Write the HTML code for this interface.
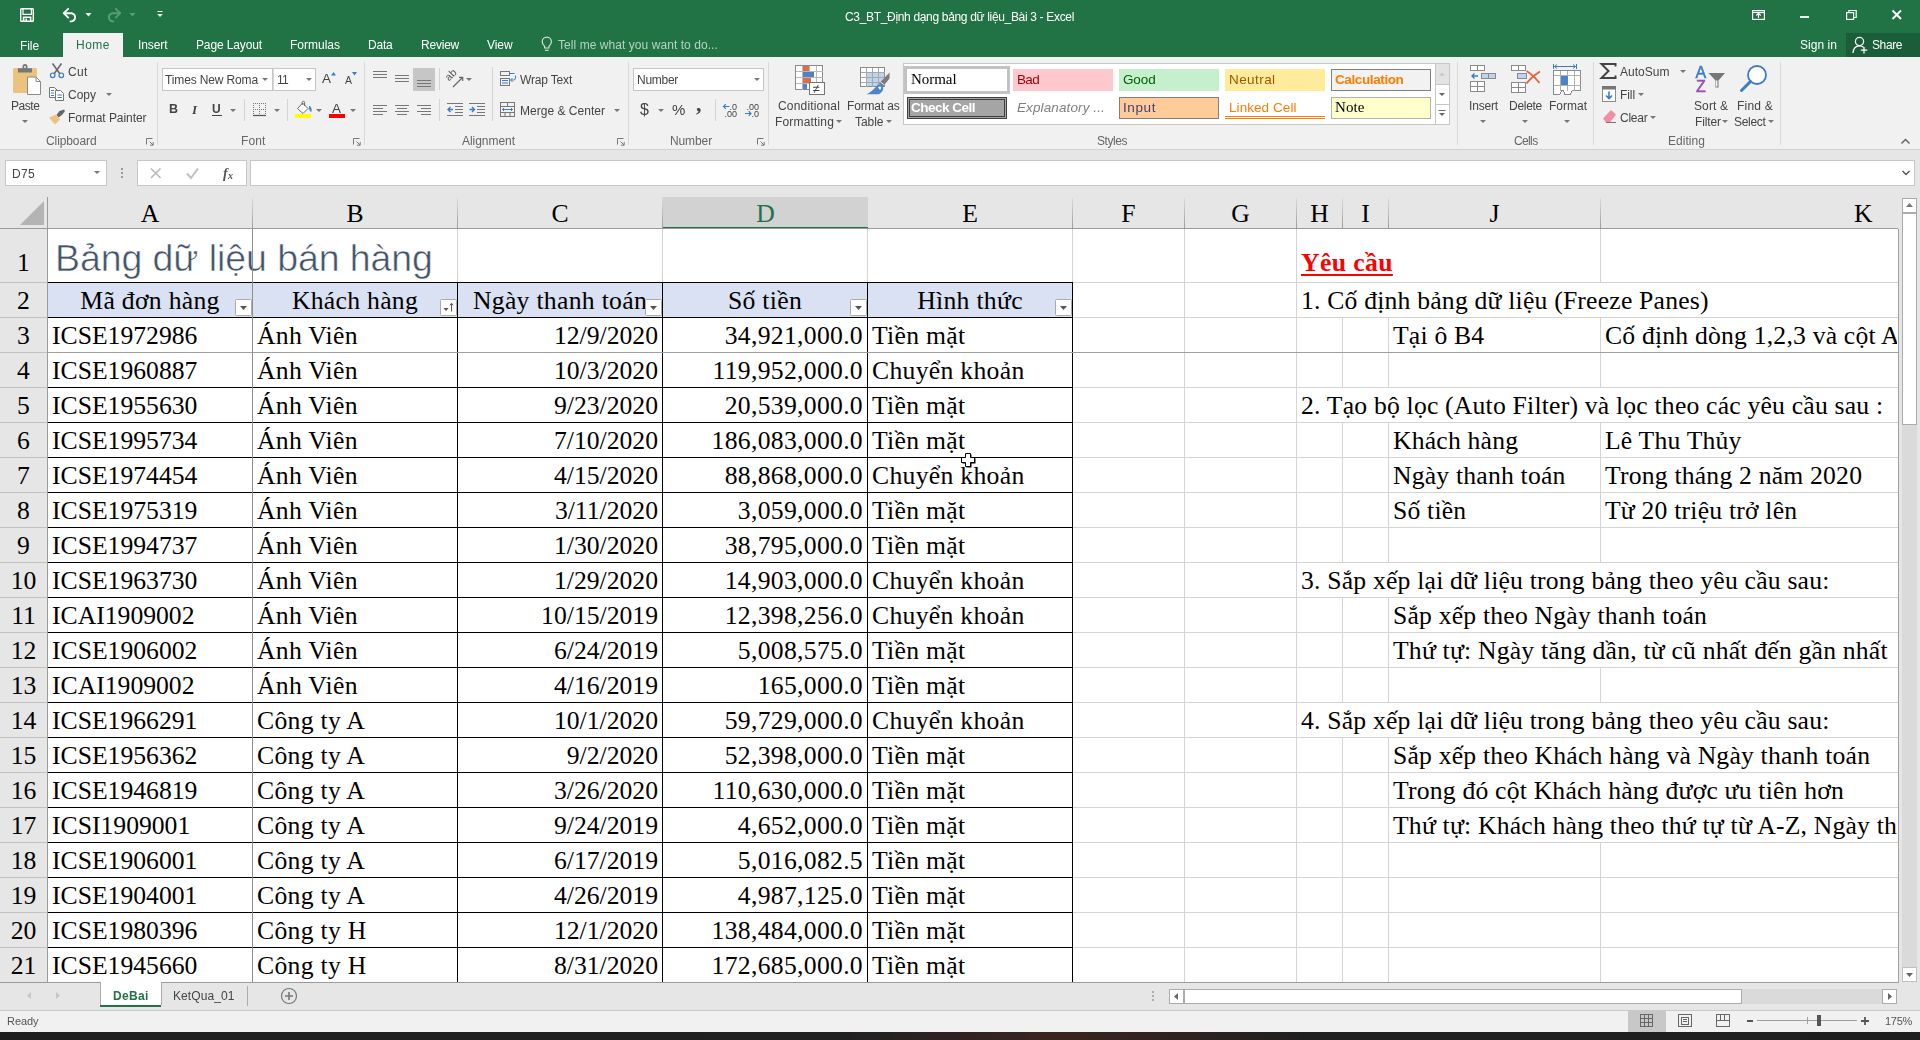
<!DOCTYPE html>
<html lang="vi"><head><meta charset="utf-8"><title>C3_BT_Định dạng bảng dữ liệu_Bài 3 - Excel</title>
<style>
html,body{margin:0;padding:0}
body{width:1920px;height:1040px;overflow:hidden;background:#e6e6e6;position:relative;font-family:"Liberation Sans",sans-serif;font-size:12px;color:#444}
div,span,svg{position:absolute;box-sizing:border-box}
b,i,u{position:static}
.t{white-space:nowrap;line-height:16px;height:16px;will-change:transform}
/* title bar */
#tb{left:0;top:0;width:1920px;height:57px;background:#217346}
#tb .t{color:#fff}
#hometab{left:63px;top:33px;width:60px;height:24px;background:#f1f1f1}
#ribbon{left:0;top:57px;width:1920px;height:93px;background:#f1f1f1;border-bottom:1px solid #d2d2d2}
.sep{width:1px;background:#d8d8d8;top:62px;height:84px}
.gl{top:134px;color:#666;text-align:center}
/* formula bar */
.box{background:#fff;border:1px solid #c6c6c6}
/* grid */
#grid{left:0;top:0;width:1898px;height:982px;overflow:hidden}
#sheet{left:48px;top:229px;width:1850px;height:753px;background:#fff}
#corner{left:0;top:197px;width:47px;height:31px}
.ch{top:197px;height:31px;border-right:1px solid #b1b1b1;border-image:linear-gradient(180deg,#e0e0e0,#9a9a9a) 1;border-width:0 1px 0 0;text-align:center;font:25.67px/34px "Liberation Serif",serif;color:#000;overflow:hidden}
.ch.sel{background:#d2d2d2;color:#217346;border-image:none;border-width:0 0 2px 0;border-style:solid;border-color:#217346;height:32px}
.rh{left:0;width:47px;text-align:center;font:25.67px "Liberation Serif",serif;color:#000;border-bottom:1px solid #c0c0c0;box-sizing:content-box;overflow:hidden}
#hline{left:0;top:228px;width:1898px;height:1px;background:#9b9b9b}
#vline{left:47px;top:197px;width:1px;height:785px;background:#9b9b9b}
.hl{left:48px;width:1850px;height:1px;background:#d4d4d4}
.vl{top:229px;width:1px;height:753px;background:#d4d4d4}
.c{height:34px;letter-spacing:.3px;font:25.67px/35px "Liberation Serif",serif;color:#000;white-space:nowrap;padding:0 4px;overflow:hidden}
.c.r{text-align:right}
.c.hd{background:#d9e1f2;text-align:center}
.c.w{background:#fff;letter-spacing:.2px}
.c.t1{line-height:67px}
.c.n{letter-spacing:0}
.yc{color:#f00;text-decoration:underline;text-decoration-thickness:2px;text-underline-offset:3px;font-weight:bold;letter-spacing:.4px}
.bh{left:48px;width:1025px;height:1px;background:#000}
.bv{top:282px;width:1px;height:700px;background:#000}
.fv{z-index:2;left:252px;top:229px;width:1px;height:753px;background:#8e8e8e}
.fh{left:48px;top:352px;width:1850px;height:1px;background:#a0a0a0}
.fb{}
#title{left:55px;top:229px;height:53px;letter-spacing:-.08px;font:37.5px/58px "Liberation Sans",sans-serif;color:#44546a;white-space:nowrap;-webkit-text-stroke:.55px #fff}
/* bottom */
#tabs{left:0;top:983px;width:1920px;height:27px;background:#e6e6e6}
#status{left:0;top:1010px;width:1920px;height:22px;background:#f1f1f1;border-top:1px solid #d0d0d0}
#task{left:0;top:1032px;width:1920px;height:8px;background:#1d1d1f}
.ar{width:0;height:0;border-left:3px solid transparent;border-right:3px solid transparent;border-top:3px solid #777}
#icons{pointer-events:none}

</style></head>
<body>
<div id="sheet"></div>
<div id="grid">
<div id="corner"><svg width="47" height="31" viewBox="0 0 47 31"><path d="M44 4 L44 28 L20 28 Z" fill="#b4b4b4"/></svg></div>
<div class="ch" style="left:48px;width:205px">A</div>
<div class="ch" style="left:253px;width:205px">B</div>
<div class="ch" style="left:458px;width:205px">C</div>
<div class="ch sel" style="left:663px;width:205px">D</div>
<div class="ch" style="left:868px;width:205px">E</div>
<div class="ch" style="left:1073px;width:112px">F</div>
<div class="ch" style="left:1185px;width:112px">G</div>
<div class="ch" style="left:1297px;width:46px">H</div>
<div class="ch" style="left:1343px;width:46px">I</div>
<div class="ch" style="left:1389px;width:212px">J</div>
<div class="ch" style="left:1601px;width:297px;border-right:0"><span style="position:absolute;left:253px">K</span></div>
<div class="rh" style="top:229px;height:53px;line-height:67px">1</div>
<div class="rh" style="top:283px;height:34px;line-height:35px">2</div>
<div class="rh" style="top:318px;height:34px;line-height:35px">3</div>
<div class="rh" style="top:353px;height:34px;line-height:35px">4</div>
<div class="rh" style="top:388px;height:34px;line-height:35px">5</div>
<div class="rh" style="top:423px;height:34px;line-height:35px">6</div>
<div class="rh" style="top:458px;height:34px;line-height:35px">7</div>
<div class="rh" style="top:493px;height:34px;line-height:35px">8</div>
<div class="rh" style="top:528px;height:34px;line-height:35px">9</div>
<div class="rh" style="top:563px;height:34px;line-height:35px">10</div>
<div class="rh" style="top:598px;height:34px;line-height:35px">11</div>
<div class="rh" style="top:633px;height:34px;line-height:35px">12</div>
<div class="rh" style="top:668px;height:34px;line-height:35px">13</div>
<div class="rh" style="top:703px;height:34px;line-height:35px">14</div>
<div class="rh" style="top:738px;height:34px;line-height:35px">15</div>
<div class="rh" style="top:773px;height:34px;line-height:35px">16</div>
<div class="rh" style="top:808px;height:34px;line-height:35px">17</div>
<div class="rh" style="top:843px;height:34px;line-height:35px">18</div>
<div class="rh" style="top:878px;height:34px;line-height:35px">19</div>
<div class="rh" style="top:913px;height:34px;line-height:35px">20</div>
<div class="rh" style="top:948px;height:34px;line-height:35px">21</div>
<div class="hl" style="top:282px"></div>
<div class="hl" style="top:317px"></div>
<div class="hl" style="top:352px"></div>
<div class="hl" style="top:387px"></div>
<div class="hl" style="top:422px"></div>
<div class="hl" style="top:457px"></div>
<div class="hl" style="top:492px"></div>
<div class="hl" style="top:527px"></div>
<div class="hl" style="top:562px"></div>
<div class="hl" style="top:597px"></div>
<div class="hl" style="top:632px"></div>
<div class="hl" style="top:667px"></div>
<div class="hl" style="top:702px"></div>
<div class="hl" style="top:737px"></div>
<div class="hl" style="top:772px"></div>
<div class="hl" style="top:807px"></div>
<div class="hl" style="top:842px"></div>
<div class="hl" style="top:877px"></div>
<div class="hl" style="top:912px"></div>
<div class="hl" style="top:947px"></div>
<div class="hl" style="top:982px"></div>
<div class="vl" style="left:252px"></div>
<div class="vl" style="left:457px"></div>
<div class="vl" style="left:662px"></div>
<div class="vl" style="left:867px"></div>
<div class="vl" style="left:1072px"></div>
<div class="vl" style="left:1184px"></div>
<div class="vl" style="left:1296px"></div>
<div class="vl" style="left:1342px"></div>
<div class="vl" style="left:1388px"></div>
<div class="vl" style="left:1600px"></div>
<div class="c hd" style="left:48px;top:283px;width:204px;height:34px">Mã đơn hàng</div>
<svg class="fb" style="left:235px;top:299px" width="17" height="17" viewBox="0 0 17 17"><rect x="0.5" y="0.5" width="16" height="16" rx="1" fill="#fdfdfd" stroke="#ababab"/><path d="M5 7h7l-3.5 4z" fill="#555"/></svg>
<div class="c hd" style="left:253px;top:283px;width:204px;height:34px">Khách hàng</div>
<svg class="fb" style="left:440px;top:299px" width="17" height="17" viewBox="0 0 17 17"><rect x="0.5" y="0.5" width="16" height="16" rx="1" fill="#fdfdfd" stroke="#ababab"/><path d="M3.5 9h5l-2.5 3z" fill="#555"/><path d="M11.5 12.5v-8M9.8 6.3l1.7-2 1.7 2" stroke="#555" stroke-width="1" fill="none"/></svg>
<div class="c hd" style="left:458px;top:283px;width:204px;height:34px">Ngày thanh toán</div>
<svg class="fb" style="left:645px;top:299px" width="17" height="17" viewBox="0 0 17 17"><rect x="0.5" y="0.5" width="16" height="16" rx="1" fill="#fdfdfd" stroke="#ababab"/><path d="M5 7h7l-3.5 4z" fill="#555"/></svg>
<div class="c hd" style="left:663px;top:283px;width:204px;height:34px">Số tiền</div>
<svg class="fb" style="left:850px;top:299px" width="17" height="17" viewBox="0 0 17 17"><rect x="0.5" y="0.5" width="16" height="16" rx="1" fill="#fdfdfd" stroke="#ababab"/><path d="M5 7h7l-3.5 4z" fill="#555"/></svg>
<div class="c hd" style="left:868px;top:283px;width:204px;height:34px">Hình thức</div>
<svg class="fb" style="left:1055px;top:299px" width="17" height="17" viewBox="0 0 17 17"><rect x="0.5" y="0.5" width="16" height="16" rx="1" fill="#fdfdfd" stroke="#ababab"/><path d="M5 7h7l-3.5 4z" fill="#555"/></svg>
<div class="c n" style="left:48px;top:318px;width:204px">ICSE1972986</div>
<div class="c" style="left:253px;top:318px;width:204px">Ánh Viên</div>
<div class="c r n" style="left:458px;top:318px;width:204px">12/9/2020</div>
<div class="c r" style="left:663px;top:318px;width:204px">34,921,000.0</div>
<div class="c" style="left:868px;top:318px;width:204px">Tiền mặt</div>
<div class="c n" style="left:48px;top:353px;width:204px">ICSE1960887</div>
<div class="c" style="left:253px;top:353px;width:204px">Ánh Viên</div>
<div class="c r n" style="left:458px;top:353px;width:204px">10/3/2020</div>
<div class="c r" style="left:663px;top:353px;width:204px">119,952,000.0</div>
<div class="c" style="left:868px;top:353px;width:204px">Chuyển khoản</div>
<div class="c n" style="left:48px;top:388px;width:204px">ICSE1955630</div>
<div class="c" style="left:253px;top:388px;width:204px">Ánh Viên</div>
<div class="c r n" style="left:458px;top:388px;width:204px">9/23/2020</div>
<div class="c r" style="left:663px;top:388px;width:204px">20,539,000.0</div>
<div class="c" style="left:868px;top:388px;width:204px">Tiền mặt</div>
<div class="c n" style="left:48px;top:423px;width:204px">ICSE1995734</div>
<div class="c" style="left:253px;top:423px;width:204px">Ánh Viên</div>
<div class="c r n" style="left:458px;top:423px;width:204px">7/10/2020</div>
<div class="c r" style="left:663px;top:423px;width:204px">186,083,000.0</div>
<div class="c" style="left:868px;top:423px;width:204px">Tiền mặt</div>
<div class="c n" style="left:48px;top:458px;width:204px">ICSE1974454</div>
<div class="c" style="left:253px;top:458px;width:204px">Ánh Viên</div>
<div class="c r n" style="left:458px;top:458px;width:204px">4/15/2020</div>
<div class="c r" style="left:663px;top:458px;width:204px">88,868,000.0</div>
<div class="c" style="left:868px;top:458px;width:204px">Chuyển khoản</div>
<div class="c n" style="left:48px;top:493px;width:204px">ICSE1975319</div>
<div class="c" style="left:253px;top:493px;width:204px">Ánh Viên</div>
<div class="c r n" style="left:458px;top:493px;width:204px">3/11/2020</div>
<div class="c r" style="left:663px;top:493px;width:204px">3,059,000.0</div>
<div class="c" style="left:868px;top:493px;width:204px">Tiền mặt</div>
<div class="c n" style="left:48px;top:528px;width:204px">ICSE1994737</div>
<div class="c" style="left:253px;top:528px;width:204px">Ánh Viên</div>
<div class="c r n" style="left:458px;top:528px;width:204px">1/30/2020</div>
<div class="c r" style="left:663px;top:528px;width:204px">38,795,000.0</div>
<div class="c" style="left:868px;top:528px;width:204px">Tiền mặt</div>
<div class="c n" style="left:48px;top:563px;width:204px">ICSE1963730</div>
<div class="c" style="left:253px;top:563px;width:204px">Ánh Viên</div>
<div class="c r n" style="left:458px;top:563px;width:204px">1/29/2020</div>
<div class="c r" style="left:663px;top:563px;width:204px">14,903,000.0</div>
<div class="c" style="left:868px;top:563px;width:204px">Chuyển khoản</div>
<div class="c n" style="left:48px;top:598px;width:204px">ICAI1909002</div>
<div class="c" style="left:253px;top:598px;width:204px">Ánh Viên</div>
<div class="c r n" style="left:458px;top:598px;width:204px">10/15/2019</div>
<div class="c r" style="left:663px;top:598px;width:204px">12,398,256.0</div>
<div class="c" style="left:868px;top:598px;width:204px">Chuyển khoản</div>
<div class="c n" style="left:48px;top:633px;width:204px">ICSE1906002</div>
<div class="c" style="left:253px;top:633px;width:204px">Ánh Viên</div>
<div class="c r n" style="left:458px;top:633px;width:204px">6/24/2019</div>
<div class="c r" style="left:663px;top:633px;width:204px">5,008,575.0</div>
<div class="c" style="left:868px;top:633px;width:204px">Tiền mặt</div>
<div class="c n" style="left:48px;top:668px;width:204px">ICAI1909002</div>
<div class="c" style="left:253px;top:668px;width:204px">Ánh Viên</div>
<div class="c r n" style="left:458px;top:668px;width:204px">4/16/2019</div>
<div class="c r" style="left:663px;top:668px;width:204px">165,000.0</div>
<div class="c" style="left:868px;top:668px;width:204px">Tiền mặt</div>
<div class="c n" style="left:48px;top:703px;width:204px">ICSE1966291</div>
<div class="c" style="left:253px;top:703px;width:204px">Công ty A</div>
<div class="c r n" style="left:458px;top:703px;width:204px">10/1/2020</div>
<div class="c r" style="left:663px;top:703px;width:204px">59,729,000.0</div>
<div class="c" style="left:868px;top:703px;width:204px">Chuyển khoản</div>
<div class="c n" style="left:48px;top:738px;width:204px">ICSE1956362</div>
<div class="c" style="left:253px;top:738px;width:204px">Công ty A</div>
<div class="c r n" style="left:458px;top:738px;width:204px">9/2/2020</div>
<div class="c r" style="left:663px;top:738px;width:204px">52,398,000.0</div>
<div class="c" style="left:868px;top:738px;width:204px">Tiền mặt</div>
<div class="c n" style="left:48px;top:773px;width:204px">ICSE1946819</div>
<div class="c" style="left:253px;top:773px;width:204px">Công ty A</div>
<div class="c r n" style="left:458px;top:773px;width:204px">3/26/2020</div>
<div class="c r" style="left:663px;top:773px;width:204px">110,630,000.0</div>
<div class="c" style="left:868px;top:773px;width:204px">Tiền mặt</div>
<div class="c n" style="left:48px;top:808px;width:204px">ICSI1909001</div>
<div class="c" style="left:253px;top:808px;width:204px">Công ty A</div>
<div class="c r n" style="left:458px;top:808px;width:204px">9/24/2019</div>
<div class="c r" style="left:663px;top:808px;width:204px">4,652,000.0</div>
<div class="c" style="left:868px;top:808px;width:204px">Tiền mặt</div>
<div class="c n" style="left:48px;top:843px;width:204px">ICSE1906001</div>
<div class="c" style="left:253px;top:843px;width:204px">Công ty A</div>
<div class="c r n" style="left:458px;top:843px;width:204px">6/17/2019</div>
<div class="c r" style="left:663px;top:843px;width:204px">5,016,082.5</div>
<div class="c" style="left:868px;top:843px;width:204px">Tiền mặt</div>
<div class="c n" style="left:48px;top:878px;width:204px">ICSE1904001</div>
<div class="c" style="left:253px;top:878px;width:204px">Công ty A</div>
<div class="c r n" style="left:458px;top:878px;width:204px">4/26/2019</div>
<div class="c r" style="left:663px;top:878px;width:204px">4,987,125.0</div>
<div class="c" style="left:868px;top:878px;width:204px">Tiền mặt</div>
<div class="c n" style="left:48px;top:913px;width:204px">ICSE1980396</div>
<div class="c" style="left:253px;top:913px;width:204px">Công ty H</div>
<div class="c r n" style="left:458px;top:913px;width:204px">12/1/2020</div>
<div class="c r" style="left:663px;top:913px;width:204px">138,484,000.0</div>
<div class="c" style="left:868px;top:913px;width:204px">Tiền mặt</div>
<div class="c n" style="left:48px;top:948px;width:204px">ICSE1945660</div>
<div class="c" style="left:253px;top:948px;width:204px">Công ty H</div>
<div class="c r n" style="left:458px;top:948px;width:204px">8/31/2020</div>
<div class="c r" style="left:663px;top:948px;width:204px">172,685,000.0</div>
<div class="c" style="left:868px;top:948px;width:204px">Tiền mặt</div>
<div class="bh" style="top:317px"></div>
<div class="bh" style="top:352px"></div>
<div class="bh" style="top:387px"></div>
<div class="bh" style="top:422px"></div>
<div class="bh" style="top:457px"></div>
<div class="bh" style="top:492px"></div>
<div class="bh" style="top:527px"></div>
<div class="bh" style="top:562px"></div>
<div class="bh" style="top:597px"></div>
<div class="bh" style="top:632px"></div>
<div class="bh" style="top:667px"></div>
<div class="bh" style="top:702px"></div>
<div class="bh" style="top:737px"></div>
<div class="bh" style="top:772px"></div>
<div class="bh" style="top:807px"></div>
<div class="bh" style="top:842px"></div>
<div class="bh" style="top:877px"></div>
<div class="bh" style="top:912px"></div>
<div class="bh" style="top:947px"></div>
<div class="bh" style="top:982px"></div>
<div class="bh" style="top:282px"></div>
<div class="bv" style="left:457px"></div>
<div class="bv" style="left:662px"></div>
<div class="bv" style="left:867px"></div>
<div class="bv" style="left:1072px"></div>
<div class="fv"></div><div class="fh"></div>
<div id="title">Bảng dữ liệu bán hàng</div>
<div class="c w t1" style="left:1297px;top:229px;width:303px;height:53px"><b class="yc">Yêu cầu</b></div>
<div class="c w" style="left:1297px;top:283px;width:600px;height:34px">1. Cố định bảng dữ liệu (Freeze Panes)</div>
<div class="c w" style="left:1389px;top:318px;width:211px;height:34px">Tại ô B4</div>
<div class="c w" style="left:1601px;top:318px;width:296px;height:34px">Cố định dòng 1,2,3 và cột A</div>
<div class="c w" style="left:1297px;top:388px;width:600px;height:34px">2. Tạo bộ lọc (Auto Filter) và lọc theo các yêu cầu sau :</div>
<div class="c w" style="left:1389px;top:423px;width:211px;height:34px">Khách hàng</div>
<div class="c w" style="left:1601px;top:423px;width:296px;height:34px">Lê Thu Thủy</div>
<div class="c w" style="left:1389px;top:458px;width:211px;height:34px">Ngày thanh toán</div>
<div class="c w" style="left:1601px;top:458px;width:296px;height:34px">Trong tháng 2 năm 2020</div>
<div class="c w" style="left:1389px;top:493px;width:211px;height:34px">Số tiền</div>
<div class="c w" style="left:1601px;top:493px;width:296px;height:34px">Từ 20 triệu trở lên</div>
<div class="c w" style="left:1297px;top:563px;width:600px;height:34px">3. Sắp xếp lại dữ liệu trong bảng theo yêu cầu sau:</div>
<div class="c w" style="left:1389px;top:598px;width:508px;height:34px">Sắp xếp theo Ngày thanh toán</div>
<div class="c w" style="left:1389px;top:633px;width:508px;height:34px">Thứ tự: Ngày tăng dần, từ cũ nhất đến gần nhất</div>
<div class="c w" style="left:1297px;top:703px;width:600px;height:34px">4. Sắp xếp lại dữ liệu trong bảng theo yêu cầu sau:</div>
<div class="c w" style="left:1389px;top:738px;width:508px;height:34px">Sắp xếp theo Khách hàng và Ngày thanh toán</div>
<div class="c w" style="left:1389px;top:773px;width:508px;height:34px">Trong đó cột Khách hàng được ưu tiên hơn</div>
<div class="c w" style="left:1389px;top:808px;width:508px;height:34px">Thứ tự: Khách hàng theo thứ tự từ A-Z, Ngày thanh toán</div>
<svg style="left:955px;top:448px" width="26" height="26" viewBox="955 448 26 26"><path d="M966.5 454.5h5v4h4v5h-4v4h-5v-4h-4v-5h4z" fill="#000"/><path d="M965.5 453.5h5v4h4v5h-4v4h-5v-4h-4v-5h4z" fill="#fff" stroke="#000" stroke-width="1"/></svg>
</div><div id="tb"></div>
<div style="left:1846px;top:33px;width:74px;height:24px;background:#195e38;"></div>
<div id="hometab"></div>
<div class="t" style="left:844.5px;top:8.8px;line-height:16px;height:16px;letter-spacing:-0.33px;color:#fff;">C3_BT_Định dạng bảng dữ liệu_Bài 3 - Excel</div>
<div class="t" style="left:19.5px;top:38.3px;line-height:16px;height:16px;letter-spacing:-0.08px;color:#fff;">File</div>
<div class="t" style="left:75.5px;top:37.3px;line-height:16px;height:16px;letter-spacing:0.50px;color:#217346;">Home</div>
<div class="t" style="left:137.5px;top:37.3px;line-height:16px;height:16px;letter-spacing:-0.08px;color:#fff;">Insert</div>
<div class="t" style="left:195.5px;top:37.3px;line-height:16px;height:16px;letter-spacing:-0.13px;color:#fff;">Page Layout</div>
<div class="t" style="left:289.5px;top:37.3px;line-height:16px;height:16px;color:#fff;">Formulas</div>
<div class="t" style="left:367.5px;top:37.3px;line-height:16px;height:16px;letter-spacing:-0.21px;color:#fff;">Data</div>
<div class="t" style="left:420.5px;top:37.3px;line-height:16px;height:16px;letter-spacing:-0.22px;color:#fff;">Review</div>
<div class="t" style="left:486.5px;top:37.3px;line-height:16px;height:16px;letter-spacing:-0.07px;color:#fff;">View</div>
<div class="t" style="left:558.0px;top:37.3px;line-height:16px;height:16px;letter-spacing:0.06px;color:#b5d3c2;">Tell me what you want to do...</div>
<div class="t" style="left:1799.5px;top:37.3px;line-height:16px;height:16px;letter-spacing:0.04px;color:#fff;">Sign in</div>
<div class="t" style="left:1871.5px;top:37.3px;line-height:16px;height:16px;letter-spacing:-0.40px;color:#fff;">Share</div>
<div id="ribbon"></div>
<div style="left:157px;top:62px;width:1px;height:83px;background:#d9d9d9;"></div>
<div style="left:364px;top:62px;width:1px;height:83px;background:#d9d9d9;"></div>
<div style="left:628px;top:62px;width:1px;height:83px;background:#d9d9d9;"></div>
<div style="left:768px;top:62px;width:1px;height:83px;background:#d9d9d9;"></div>
<div style="left:1457px;top:62px;width:1px;height:83px;background:#d9d9d9;"></div>
<div style="left:1593px;top:62px;width:1px;height:83px;background:#d9d9d9;"></div>
<div style="left:1780px;top:62px;width:1px;height:83px;background:#d9d9d9;"></div>
<div style="left:244px;top:99px;width:1px;height:22px;background:#d4d4d4;"></div>
<div style="left:287px;top:99px;width:1px;height:22px;background:#d4d4d4;"></div>
<div style="left:439px;top:68px;width:1px;height:22px;background:#d4d4d4;"></div>
<div style="left:439px;top:99px;width:1px;height:22px;background:#d4d4d4;"></div>
<div style="left:492px;top:67px;width:1px;height:54px;background:#d4d4d4;"></div>
<div style="left:715px;top:99px;width:1px;height:22px;background:#d4d4d4;"></div>
<div class="t" style="left:45.5px;top:133.3px;line-height:16px;height:16px;letter-spacing:-0.10px;color:#666;">Clipboard</div>
<div class="t" style="left:241.0px;top:133.3px;line-height:16px;height:16px;letter-spacing:0.12px;color:#666;">Font</div>
<div class="t" style="left:462.0px;top:133.3px;line-height:16px;height:16px;letter-spacing:-0.04px;color:#666;">Alignment</div>
<div class="t" style="left:669.5px;top:133.3px;line-height:16px;height:16px;letter-spacing:-0.11px;color:#666;">Number</div>
<div class="t" style="left:1096.5px;top:133.3px;line-height:16px;height:16px;letter-spacing:-0.45px;color:#666;">Styles</div>
<div class="t" style="left:1513.5px;top:133.3px;line-height:16px;height:16px;letter-spacing:-0.63px;color:#666;">Cells</div>
<div class="t" style="left:1667.5px;top:133.3px;line-height:16px;height:16px;letter-spacing:0.04px;color:#666;">Editing</div>
<div class="t" style="left:11.0px;top:97.8px;line-height:16px;height:16px;letter-spacing:-0.44px;color:#444;">Paste</div>
<div class="ar" style="left:22px;top:120px;border-top-color:#777"></div>
<div class="t" style="left:68.0px;top:63.8px;line-height:16px;height:16px;letter-spacing:0.28px;color:#444;">Cut</div>
<div class="t" style="left:68.0px;top:86.8px;line-height:16px;height:16px;color:#444;">Copy</div>
<div class="ar" style="left:106px;top:93px;border-top-color:#777"></div>
<div class="t" style="left:68.0px;top:110.3px;line-height:16px;height:16px;letter-spacing:-0.06px;color:#444;">Format Painter</div>
<div style="left:162px;top:68px;width:111px;height:23px;background:#fff;border:1px solid #c6c6c6"></div>
<div style="left:273px;top:68px;width:43px;height:23px;background:#fff;border:1px solid #c6c6c6;border-left-color:#d8d8d8"></div>
<div class="t" style="left:165.0px;top:71.8px;line-height:16px;height:16px;letter-spacing:-0.14px;color:#444;">Times New Roma</div>
<div class="ar" style="left:262px;top:78px;border-top-color:#777"></div>
<div class="t" style="left:276.5px;top:71.8px;line-height:16px;height:16px;letter-spacing:-0.73px;color:#444;">11</div>
<div class="ar" style="left:306px;top:78px;border-top-color:#777"></div>
<div class="t" style="left:322.0px;top:70.3px;line-height:18px;height:18px;font-size:13.5px;letter-spacing:1.00px;color:#444;">A</div>
<div class="t" style="left:345.0px;top:73.4px;line-height:14px;height:14px;font-size:10.5px;letter-spacing:1.00px;color:#444;">A</div>
<div class="t" style="left:168.5px;top:101.2px;line-height:17px;height:17px;font-size:12.5px;letter-spacing:-1.03px;color:#444;font-weight:bold;">B</div>
<div class="t" style="left:192.0px;top:101.1px;line-height:17px;height:17px;font-size:13px;letter-spacing:0.44px;color:#444;font-weight:bold;font-style:italic;font-family:'Liberation Serif',serif;">I</div>
<div class="t" style="left:212.0px;top:101.3px;line-height:16px;height:16px;letter-spacing:0.83px;color:#444;font-weight:bold;">U</div>
<div style="left:212px;top:115px;width:10px;height:1px;background:#444;"></div>
<div class="ar" style="left:230px;top:109px;border-top-color:#777"></div>
<div class="ar" style="left:274px;top:109px;border-top-color:#777"></div>
<div class="ar" style="left:316px;top:109px;border-top-color:#777"></div>
<div class="ar" style="left:350px;top:109px;border-top-color:#777"></div>
<div class="t" style="left:331.5px;top:99.6px;line-height:18px;height:18px;font-size:13.5px;letter-spacing:2.00px;color:#444;">A</div>
<div style="left:295px;top:114px;width:16px;height:4px;background:#ffff00;"></div>
<div style="left:329px;top:114px;width:16px;height:4px;background:#ff0000;"></div>
<div style="left:413px;top:68px;width:22px;height:23px;background:#c6c6c6;"></div>
<div class="ar" style="left:466px;top:78px;border-top-color:#777"></div>
<div class="t" style="left:519.5px;top:71.8px;line-height:16px;height:16px;letter-spacing:-0.17px;color:#444;">Wrap Text</div>
<div class="t" style="left:519.5px;top:102.8px;line-height:16px;height:16px;letter-spacing:0.02px;color:#444;">Merge &amp; Center</div>
<div class="ar" style="left:614px;top:109px;border-top-color:#777"></div>
<div style="left:633px;top:68px;width:131px;height:23px;background:#fff;border:1px solid #c6c6c6"></div>
<div class="t" style="left:636.5px;top:71.8px;line-height:16px;height:16px;letter-spacing:-0.28px;color:#444;">Number</div>
<div class="ar" style="left:754px;top:78px;border-top-color:#777"></div>
<div class="t" style="left:640.0px;top:99.0px;line-height:21px;height:21px;font-size:16px;letter-spacing:-0.40px;color:#444;">$</div>
<div class="ar" style="left:658px;top:109px;border-top-color:#777"></div>
<div class="t" style="left:672.0px;top:99.8px;line-height:20px;height:20px;font-size:15px;letter-spacing:-0.34px;color:#444;">%</div>
<div class="t" style="left:696.0px;top:88.6px;line-height:29px;height:29px;font-size:22px;letter-spacing:1.00px;color:#444;font-weight:bold;font-family:'Liberation Serif',serif;">,</div>
<div class="t" style="left:778.0px;top:97.8px;line-height:16px;height:16px;letter-spacing:0.18px;color:#444;">Conditional</div>
<div class="t" style="left:775.0px;top:113.8px;line-height:16px;height:16px;letter-spacing:0.17px;color:#444;">Formatting</div>
<div class="ar" style="left:836px;top:120px;border-top-color:#777"></div>
<div class="t" style="left:847.0px;top:97.8px;line-height:16px;height:16px;letter-spacing:-0.17px;color:#444;">Format as</div>
<div class="t" style="left:855.0px;top:113.8px;line-height:16px;height:16px;letter-spacing:-0.04px;color:#444;">Table</div>
<div class="ar" style="left:886px;top:120px;border-top-color:#777"></div>
<div style="left:903px;top:63px;width:547px;height:62px;background:#fff;border:1px solid #c6c6c6"></div>
<div style="left:1435px;top:64px;width:14px;height:21px;background:#e3e3e3;"></div>
<div style="left:1435px;top:64px;width:1px;height:60px;background:#c6c6c6;"></div>
<div style="left:1435px;top:84px;width:14px;height:1px;background:#c6c6c6;"></div>
<div style="left:1435px;top:104px;width:14px;height:1px;background:#c6c6c6;"></div>
<div style="left:904px;top:66px;width:106px;height:28px;background:#fff;border:3px solid #c3c3c3"></div>
<div class="t" style="left:910.5px;top:68.9px;line-height:20px;height:20px;font-size:15px;letter-spacing:-0.05px;color:#000;font-family:'Liberation Serif',serif;">Normal</div>
<div style="left:1013px;top:69px;width:100px;height:22px;background:#ffc7ce;"></div>
<div class="t" style="left:1017.0px;top:71.0px;line-height:18px;height:18px;font-size:13.5px;letter-spacing:-0.67px;color:#9c0006;">Bad</div>
<div style="left:1119px;top:69px;width:100px;height:22px;background:#c6efce;"></div>
<div class="t" style="left:1123.0px;top:71.0px;line-height:18px;height:18px;font-size:13.5px;letter-spacing:-0.13px;color:#006100;">Good</div>
<div style="left:1225px;top:69px;width:100px;height:22px;background:#ffeb9c;"></div>
<div class="t" style="left:1229.0px;top:71.0px;line-height:18px;height:18px;font-size:13.5px;letter-spacing:0.43px;color:#9c5700;">Neutral</div>
<div style="left:1331px;top:69px;width:100px;height:22px;background:#f2f2f2;border:1px solid #7f7f7f"></div>
<div class="t" style="left:1335.0px;top:71.0px;line-height:18px;height:18px;font-size:13.5px;letter-spacing:-0.39px;color:#fa7d00;font-weight:bold;">Calculation</div>
<div style="left:907px;top:97px;width:100px;height:22px;background:#a5a5a5;border:3px double #3f3f3f"></div>
<div class="t" style="left:911.0px;top:98.5px;line-height:18px;height:18px;font-size:13.5px;letter-spacing:-0.50px;color:#fff;font-weight:bold;">Check Cell</div>
<div class="t" style="left:1017.0px;top:98.5px;line-height:18px;height:18px;font-size:13.5px;letter-spacing:0.11px;color:#7f7f7f;font-style:italic;">Explanatory ...</div>
<div style="left:1119px;top:97px;width:100px;height:22px;background:#ffcc99;border:1px solid #7f7f7f"></div>
<div class="t" style="left:1123.0px;top:98.5px;line-height:18px;height:18px;font-size:13.5px;letter-spacing:0.60px;color:#3f3f76;">Input</div>
<div class="t" style="left:1229.0px;top:98.5px;line-height:18px;height:18px;font-size:13.5px;letter-spacing:0.07px;color:#fa7d00;">Linked Cell</div>
<div style="left:1225px;top:116px;width:100px;height:3px;background:transparent;border-top:1px solid #ff8001;border-bottom:1px solid #ff8001"></div>
<div style="left:1331px;top:97px;width:100px;height:22px;background:#ffffcc;border:1px solid #b2b2b2"></div>
<div class="t" style="left:1335.0px;top:97.4px;line-height:20px;height:20px;font-size:15px;letter-spacing:0.09px;color:#000;font-family:'Liberation Serif',serif;">Note</div>
<div class="t" style="left:1468.5px;top:97.8px;line-height:16px;height:16px;letter-spacing:-0.17px;color:#444;">Insert</div>
<div class="ar" style="left:1480px;top:120px;border-top-color:#777"></div>
<div class="t" style="left:1508.5px;top:97.8px;line-height:16px;height:16px;letter-spacing:-0.28px;color:#444;">Delete</div>
<div class="ar" style="left:1522px;top:120px;border-top-color:#777"></div>
<div class="t" style="left:1548.5px;top:97.8px;line-height:16px;height:16px;color:#444;">Format</div>
<div class="ar" style="left:1564px;top:120px;border-top-color:#777"></div>
<div class="t" style="left:1620.0px;top:64.3px;line-height:16px;height:16px;letter-spacing:0.02px;color:#444;">AutoSum</div>
<div class="ar" style="left:1680px;top:70px;border-top-color:#777"></div>
<div class="t" style="left:1620.0px;top:87.3px;line-height:16px;height:16px;letter-spacing:-0.08px;color:#444;">Fill</div>
<div class="ar" style="left:1638px;top:93px;border-top-color:#777"></div>
<div class="t" style="left:1620.0px;top:110.3px;line-height:16px;height:16px;letter-spacing:-0.23px;color:#444;">Clear</div>
<div class="ar" style="left:1650px;top:116px;border-top-color:#777"></div>
<div class="t" style="left:1694.0px;top:97.8px;line-height:16px;height:16px;letter-spacing:0.11px;color:#444;">Sort &amp;</div>
<div class="t" style="left:1694.5px;top:113.8px;line-height:16px;height:16px;letter-spacing:-0.11px;color:#444;">Filter</div>
<div class="ar" style="left:1722px;top:120px;border-top-color:#777"></div>
<div class="t" style="left:1736.5px;top:97.8px;line-height:16px;height:16px;letter-spacing:0.22px;color:#444;">Find &amp;</div>
<div class="t" style="left:1734.0px;top:113.8px;line-height:16px;height:16px;letter-spacing:-0.31px;color:#444;">Select</div>
<div class="ar" style="left:1768px;top:120px;border-top-color:#777"></div>
<div style="left:5px;top:160px;width:102px;height:26px;background:#fff;border:1px solid #c6c6c6"></div>
<div class="t" style="left:12.0px;top:165.6px;line-height:16px;height:16px;letter-spacing:0.33px;color:#444;">D75</div>
<div class="ar" style="left:94px;top:171px;border-top-color:#777"></div>
<div style="left:137px;top:160px;width:110px;height:26px;background:#fff;border:1px solid #c6c6c6"></div>
<div style="left:250px;top:160px;width:1665px;height:26px;background:#fff;border:1px solid #c6c6c6"></div>
<div class="t" style="left:223.0px;top:163.8px;line-height:19px;height:19px;font-size:14px;letter-spacing:-0.16px;color:#555;font-weight:bold;font-style:italic;font-family:'Liberation Serif',serif;">f</div>
<div class="t" style="left:227.5px;top:168.6px;line-height:13px;height:13px;font-size:10px;letter-spacing:0.50px;color:#555;font-weight:bold;font-style:italic;font-family:'Liberation Serif',serif;">x</div>
<div id="hline"></div><div id="vline"></div>
<svg id="icons" style="left:0;top:0" width="1920" height="197" viewBox="0 0 1920 197">
<!-- title bar: save -->
<g fill="none" stroke="#fff" stroke-width="1.4">
<rect x="20.7" y="8.7" width="12.6" height="12.6" rx="0.8"/>
<path d="M23 9v5.3h8.4V9" stroke-width="1.2"/>
<path d="M23.6 21v-3.8h7v3.8M26.3 21v-2.5" stroke-width="1.6"/>
</g>
<!-- undo -->
<g fill="none" stroke="#fff" stroke-width="1.9" stroke-linecap="round" stroke-linejoin="round">
<path d="M68.2 8.8L63.8 13.2L68.2 17.6"/><path d="M64.2 13.2H71.5A4.6 4.2 0 0 1 71.5 21.4H70.5"/>
</g>
<path d="M85.5 13h6l-3 3.4z" fill="#fff"/>
<!-- redo dim -->
<g fill="none" stroke="#5a9c79" stroke-width="1.9" stroke-linecap="round" stroke-linejoin="round">
<path d="M115.8 8.8L120.2 13.2L115.8 17.6"/><path d="M119.8 13.2H112.5A4.6 4.2 0 0 0 112.5 21.4H113.5"/>
</g>
<path d="M129.5 13h6l-3 3.4z" fill="#5a9c79"/>
<path d="M157.5 11.5h5" stroke="#fff" stroke-width="1"/><path d="M157.3 14h5.4l-2.7 3z" fill="#fff"/>
<!-- bulb -->
<g fill="none" stroke="#cfe3d8" stroke-width="1.2">
<path d="M544.6 48v-1.8c-1.5-1.2-2.4-2.6-2.4-4.4a4.6 4.6 0 0 1 9.2 0c0 1.800-.9 3.200-2.400 4.400V48z"/><path d="M545 50.300h3.600"/>
</g>
<!-- window buttons -->
<g fill="none" stroke="#fff" stroke-width="1.2">
<rect x="1752.600" y="10.600" width="11.800" height="8.800"/><path d="M1752 12.500h13"/><path d="M1758.500 18v-4.500M1756.300 15.500l2.200-2.200 2.200 2.200" stroke-width="1.100"/>
<path d="M1800 17h9" stroke-width="1.800"/>
<rect x="1846.600" y="12.600" width="7" height="6.800"/><path d="M1848.800 12.500v-2h7.400v7h-2.400" />
<path d="M1892.500 10.500l8.500 8.500M1901 10.500l-8.500 8.500" stroke-width="2"/>
</g>
<!-- share icon -->
<g fill="none" stroke="#fff" stroke-width="1.300">
<circle cx="1859.500" cy="41.500" r="4.100"/><path d="M1853 53c.3-4.500 2.800-7.200 6.500-7.200 1.600 0 3 .5 4 1.500"/><path d="M1864 47v6.500M1860.800 50.200h6.500"/>
</g>
<!-- PASTE icon -->
<rect x="13" y="68" width="24" height="25" rx="1.500" fill="#ecc37e"/>
<path d="M18 72.500v-4.300h4.500v-1.700a2.500 2.500 0 0 1 5 0v1.700H32v4.300z" fill="#777"/>
<circle cx="25" cy="67" r="1" fill="#f1f1f1"/>
<path d="M27.500 77h8.500l4.500 4.500v13h-13z" fill="#fff" stroke="#8a8a8a" stroke-width="1"/>
<path d="M36 77v4.500h4.500" fill="none" stroke="#8a8a8a" stroke-width="1"/>
<!-- cut -->
<path d="M52.500 63.500l7.500 10.500M61.500 63.500l-7.500 10.500" stroke="#666" stroke-width="1.500" fill="none"/>
<circle cx="52.700" cy="75.300" r="2.300" fill="none" stroke="#3b7cc4" stroke-width="1.200"/><circle cx="61.300" cy="75.300" r="2.300" fill="none" stroke="#3b7cc4" stroke-width="1.200"/>
<!-- copy -->
<g fill="#fff" stroke="#777" stroke-width="1"><path d="M49.500 87.500h5l2.500 2.500v7.500h-7.500z"/><path d="M55.500 90.500h5l3 3v7h-8z"/></g>
<path d="M51 90.500h3M51 93h3M51 95.500h3M57.500 95h4.500M57.500 97.500h4.500" stroke="#3b7cc4" stroke-width="1"/>
<!-- format painter -->
<path d="M56.500 115l3-4 4.500-1.500 1 1.500-3 4-3.500 2.500z" fill="#666"/>
<path d="M49 117.500l7-3 4 5-5 5z" fill="#ecc37e"/>
<!-- dialog launchers -->
<g transform="translate(0 0)" fill="none" stroke="#777" stroke-width="1"><path d="M146.500 144.500v-6h6"/><path d="M149.500 141.500l3.500 3.500M153.200 142v3.200h-3.200"/></g>
<g transform="translate(207 0)" fill="none" stroke="#777" stroke-width="1"><path d="M146.500 144.500v-6h6"/><path d="M149.500 141.500l3.500 3.500M153.200 142v3.200h-3.200"/></g>
<g transform="translate(471 0)" fill="none" stroke="#777" stroke-width="1"><path d="M146.500 144.500v-6h6"/><path d="M149.500 141.500l3.500 3.500M153.200 142v3.200h-3.200"/></g>
<g transform="translate(611 0)" fill="none" stroke="#777" stroke-width="1"><path d="M146.500 144.500v-6h6"/><path d="M149.500 141.500l3.500 3.500M153.200 142v3.200h-3.200"/></g>

<!-- grow/shrink font triangles -->
<path d="M331 75.500h5l-2.500-3.500z" fill="#3b7cc4"/><path d="M352 72h5l-2.500 3.500z" fill="#3b7cc4"/>
<!-- borders icon -->
<g stroke="#777" stroke-width="1" stroke-dasharray="1 1" fill="none"><path d="M253 103.500h13M253 109.500h13M253.500 103v12M259.500 103v12M265.500 103v12"/></g>
<path d="M253 115.500h13" stroke="#555" stroke-width="1.200"/>
<!-- fill bucket -->
<path d="M297.500 108.500l5-5.500 5.500 5.500-5 5z" fill="#fff" stroke="#666" stroke-width="1"/><path d="M302.200 105v-2.500a1.200 1.200 0 0 1 2.400 0v3.500" fill="none" stroke="#666" stroke-width="1"/>
<path d="M309.500 106c1.500 1.500 2 3.500 1.500 5.500-1-1-1.800-2.500-1.500-5.500z" fill="#3b7cc4" stroke="#3b7cc4" stroke-width="0.800"/>
<!-- align icons -->
<g stroke="#777" stroke-width="1" shape-rendering="crispEdges">
<path d="M373 71.500h14M373 74.500h14M373 77.500h14"/>
<path d="M395 75.500h14M395 78.500h14M395 81.500h14"/>
<path d="M417 80.500h14M417 83.500h14M417 86.500h14"/>
<path d="M373 105.500h14M373 108.500h10M373 111.500h14M373 114.500h10"/>
<path d="M395 105.500h14M397 108.500h10M395 111.500h14M397 114.500h10"/>
<path d="M417 105.500h14M421 108.500h10M417 111.500h14M421 114.500h10"/>
<path d="M447 103.500h16M455 106.500h8M455 109.500h8M455 112.500h8M447 115.500h16"/>
<path d="M469 103.500h16M477 106.500h8M477 109.500h8M477 112.500h8M469 115.500h16"/>
</g>
<path d="M453 109.500h-5M450.500 107l-2.500 2.500 2.500 2.500" stroke="#3b7cc4" stroke-width="1.400" fill="none"/>
<path d="M469.500 109.500h5M472 107l2.500 2.500-2.500 2.500" stroke="#3b7cc4" stroke-width="1.400" fill="none"/>
<!-- orientation -->
<g fill="none" stroke="#666" stroke-width="1.200"><path d="M453 87l9.500-9.500M462.700 81v-3.700H459"/></g>
<text x="0" y="0" transform="translate(449 81.500) rotate(-45)" font-family="Liberation Sans,sans-serif" font-size="10.500" fill="#555">ab</text>
<!-- wrap text -->
<g fill="none" stroke="#777" stroke-width="1"><rect x="500.500" y="71.500" width="9" height="4"/><rect x="500.500" y="78.500" width="9" height="7"/><path d="M502 80.500h6M502 83h6" stroke="#3b7cc4"/>
<path d="M510 73.500h4.500" stroke="#3b7cc4"/><path d="M515.500 75.500v2.500a2 2 0 0 1-2 2h-2.500M512.500 78l-2 2 2 2" stroke="#3b7cc4"/></g>
<!-- merge -->
<g fill="none" stroke="#777" stroke-width="1"><rect x="500.500" y="102.500" width="14" height="14"/><path d="M500.500 106.500h14M500.500 112.500h14M507.500 102.500v4M505 112.500v4M510 112.500v4"/>
<path d="M502.500 109.500h10M504 108l-1.500 1.500 1.500 1.500M511 108l1.500 1.500-1.500 1.500" stroke="#3b7cc4"/></g>
<!-- inc/dec decimal -->
<g font-family="Liberation Sans,sans-serif" font-size="9" fill="#444"><text x="729.500" y="109.500">.0</text><text x="724.500" y="116.500">.00</text><text x="746.500" y="109.500">.00</text><text x="751.500" y="116.500">.0</text></g>
<path d="M729.500 106.500h-6M725.800 104.200l-2.300 2.300 2.300 2.300" stroke="#3b7cc4" stroke-width="1.200" fill="none"/>
<path d="M745 113.500h6M748.700 111.200l2.300 2.300-2.300 2.300" stroke="#3b7cc4" stroke-width="1.200" fill="none"/>
<!-- conditional formatting -->
<g shape-rendering="crispEdges"><rect x="795.500" y="65.500" width="27" height="24" fill="#fff" stroke="#8a8a8a"/>
<path d="M802.500 65.500v24M809.500 65.500v24M816.500 65.500v24M795.500 71.500h27M795.500 77.500h27M795.500 83.500h27" stroke="#b8b8b8" fill="none"/>
<rect x="803" y="66" width="6" height="5" fill="#e06b47"/><rect x="803" y="72" width="11" height="5" fill="#4a86c5"/><rect x="803" y="78" width="8" height="5" fill="#e06b47"/><rect x="803" y="84" width="4" height="5" fill="#4a86c5"/>
<rect x="809.500" y="82.500" width="15" height="12" fill="#fff" stroke="#777"/></g>
<text x="812.500" y="92.800" font-family="Liberation Sans,sans-serif" font-size="13" fill="#444">≠</text>
<!-- format as table -->
<g shape-rendering="crispEdges"><rect x="860.500" y="67.500" width="24" height="19" fill="#fff" stroke="#8a8a8a"/><rect x="867" y="73" width="17" height="13" fill="#bdd4ec"/>
<path d="M866.500 67.500v19M872.500 67.500v19M878.500 67.500v19M860.500 72.500h24M860.500 77.500h24M860.500 82.500h24" stroke="#a8a8a8" fill="none"/></g>
<path d="M889.500 72.500v6l-6.500 8-4-3z" fill="#7a7a7a"/><path d="M880.200 81.800l4.300 3.200" stroke="#f1f1f1" stroke-width="0.900"/>
<path d="M877.500 85c2-1.300 4.500-.6 5.500 1.500 1 3-1 6.300-4.500 7.800h-12c4.500-2.300 8-5.300 11-9.300z" fill="#4a86c5"/><path d="M878 87.200c1-.9 2.500-.8 3.300.5l-1.200 2.300z" fill="#fff"/>
<!-- gallery scroll arrows -->
<path d="M1439 75.500h6l-3-3z" fill="#c4c4c4"/><path d="M1439 93h6l-3 3z" fill="#666"/><path d="M1438.500 110.500h7" stroke="#666"/><path d="M1439 113h6l-3 3z" fill="#666"/>
<!-- insert cells -->
<g shape-rendering="crispEdges" fill="#fff" stroke="#8a8a8a"><rect x="1470.500" y="65.500" width="14" height="5"/><path d="M1477.500 65.500v5" />
<rect x="1481.500" y="73.500" width="14" height="5" fill="#bdd4ec"/><path d="M1488.500 73.500v5"/>
<rect x="1470.500" y="81.500" width="14" height="10"/><path d="M1477.500 81.500v10M1470.500 86.500h14"/></g>
<path d="M1478 76h-6M1474.500 73.500l-2.500 2.500 2.500 2.500" stroke="#3b7cc4" stroke-width="1.400" fill="none"/>
<!-- delete cells -->
<g shape-rendering="crispEdges" fill="#fff" stroke="#8a8a8a"><rect x="1511.500" y="65.500" width="14" height="5"/><path d="M1518.500 65.500v5" />
<rect x="1517.500" y="73.500" width="9" height="5" fill="#bdd4ec"/>
<rect x="1511.500" y="82.500" width="14" height="10"/><path d="M1518.500 82.500v10M1511.500 87.500h14"/></g>
<path d="M1526.500 71c4 2.500 9 7 13 12M1540 71.500c-5 3-10 7.500-13.500 12" stroke="#e0623c" stroke-width="1.800" fill="none"/>
<!-- format cells -->
<g shape-rendering="crispEdges"><path d="M1553.500 70.500h27v20h-8l-2 3.500h-6l-1-3.500h-2l-1.500 3.500h-6.500z" fill="#fff" stroke="#8a8a8a"/>
<path d="M1560.500 70.500v20M1567.500 70.500v20M1574.500 70.500v20M1553.500 75.500h27M1553.500 85.500h27" stroke="#b0b0b0" fill="none"/>
<rect x="1561" y="76" width="7" height="9" fill="#4a86c5"/></g>
<path d="M1554.500 66.500h21M1553.500 64v5M1576.500 64v5M1557 64.500l-2.500 2 2.500 2M1573 64.500l2.500 2-2.500 2" stroke="#3b7cc4" stroke-width="1" fill="none"/>
<!-- sigma -->
<path d="M1615.500 66.500v-2.500h-14l7 7-7 7h14v-2.500" fill="none" stroke="#444" stroke-width="2"/>
<!-- fill -->
<rect x="1602.500" y="86.500" width="13" height="15" fill="#fff" stroke="#8a8a8a"/><rect x="1602" y="86" width="14" height="3.500" fill="#777"/>
<path d="M1609 91.500v7M1606 95.500l3 3 3-3" stroke="#3b7cc4" stroke-width="1.600" fill="none"/>
<!-- clear -->
<path d="M1603 118.500l8-8.500 5 4.500-6 8h-4z" fill="#ee8fa3"/><path d="M1606 122.500h10" stroke="#777" stroke-width="1"/>
<!-- sort & filter -->
<text x="1695.500" y="78" font-family="Liberation Sans,sans-serif" font-size="16" fill="#3b7cc4" stroke="#3b7cc4" stroke-width=".5">A</text>
<text x="1696" y="92" font-family="Liberation Sans,sans-serif" font-size="16" fill="#9a4fb5" stroke="#9a4fb5" stroke-width=".5">Z</text>
<path d="M1708.500 73h16.500l-6.500 7.500v7h-3v-7z" fill="#777"/><rect x="1716" y="80.500" width="1.500" height="6" fill="#f1f1f1"/>
<!-- find -->
<circle cx="1757" cy="75" r="9" fill="#fff" stroke="#3b7cc4" stroke-width="1.800"/><path d="M1750.500 81.500l-9 9" stroke="#3b7cc4" stroke-width="3" stroke-linecap="round"/>
<!-- collapse -->
<path d="M1901.500 143.500l4-4 4 4" fill="none" stroke="#666" stroke-width="1.500"/>
<!-- formula bar -->
<g fill="#9a9a9a"><rect x="121" y="168" width="2" height="2"/><rect x="121" y="172" width="2" height="2"/><rect x="121" y="176" width="2" height="2"/></g>
<path d="M151 168.500l9.500 9.500M160.500 168.500l-9.500 9.500" stroke="#b8b8b8" stroke-width="1.600"/><path d="M187 173.500l4 4.500 7-9.500" stroke="#c0c0c0" stroke-width="2" fill="none"/>
<path d="M1902.500 171l3.500 3.500 3.500-3.500" fill="none" stroke="#555" stroke-width="1.500"/>
</svg>
<div style="left:1898px;top:197px;width:22px;height:786px;background:#e6e6e6;"></div>
<div style="left:1898px;top:229px;width:1px;height:754px;background:#a0a0a0;"></div>
<div style="left:1902px;top:213px;width:15px;height:754px;background:#dadada;"></div>
<div style="left:1902px;top:198px;width:15px;height:15px;background:#fff;border:1px solid #ababab"></div>
<div style="left:1902px;top:213px;width:15px;height:212px;background:#fff;border:1px solid #ababab"></div>
<div style="left:1902px;top:967px;width:15px;height:15px;background:#fff;border:1px solid #c0c0c0"></div>
<div style="left:0px;top:982px;width:1898px;height:1px;background:#9b9b9b;"></div>
<div style="left:0px;top:983px;width:1920px;height:27px;background:#e6e6e6;"></div>
<div style="left:0px;top:1010px;width:1920px;height:1px;background:#c9c9c9;"></div>
<div style="left:100px;top:982px;width:62px;height:23px;background:#fff;border-left:1px solid #ababab;border-right:1px solid #ababab"></div>
<div style="left:100px;top:1005px;width:61px;height:2px;background:#217346;"></div>
<div class="t" style="left:112.5px;top:988.1px;line-height:16px;height:16px;letter-spacing:0.30px;color:#217346;font-weight:bold;">DeBai</div>
<div class="t" style="left:173.0px;top:988.1px;line-height:16px;height:16px;letter-spacing:0.09px;color:#444;">KetQua_01</div>
<div style="left:247px;top:986px;width:1px;height:20px;background:#ababab;"></div>
<div style="left:1169px;top:989px;width:15px;height:15px;background:#fff;border:1px solid #ababab"></div>
<div style="left:1184px;top:989px;width:558px;height:15px;background:#fff;border:1px solid #ababab"></div>
<div style="left:1742px;top:989px;width:140px;height:15px;background:#dadada;"></div>
<div style="left:1882px;top:989px;width:15px;height:15px;background:#fff;border:1px solid #ababab"></div>
<div style="left:0px;top:1011px;width:1920px;height:21px;background:#f1f1f1;"></div>
<div style="left:1628px;top:1011px;width:38px;height:21px;background:#c8c8c8;"></div>
<div class="t" style="left:7.0px;top:1013.7px;line-height:15px;height:15px;font-size:11px;letter-spacing:-0.06px;color:#555;">Ready</div>
<div class="t" style="left:1884.5px;top:1013.7px;line-height:15px;height:15px;font-size:11px;letter-spacing:-0.28px;color:#555;">175%</div>
<div style="left:0px;top:1032px;width:1920px;height:8px;background:linear-gradient(90deg,#1e1e1f 0%,#212021 44%,#3a2421 55%,#2c2220 62%,#201f20 68%,#1e1e1f 100%);"></div>
<svg style="left:0;top:0" width="1920" height="1040" viewBox="0 0 1920 1040">
<path d="M31 992l-4 3.500 4 3.500z" fill="#c6c6c6"/><path d="M56 992l4 3.500-4 3.500z" fill="#c6c6c6"/>
<circle cx="289" cy="996" r="7.500" fill="none" stroke="#777" stroke-width="1.200"/><path d="M285 996h8M289 992v8" stroke="#777" stroke-width="1.600"/>
<g fill="#ababab"><rect x="1152" y="991" width="2" height="2"/><rect x="1152" y="995" width="2" height="2"/><rect x="1152" y="999" width="2" height="2"/></g>
<path d="M1178 993l-4 3.500 4 3.500z" fill="#666"/><path d="M1888 993l4 3.500-4 3.500z" fill="#666"/>
<path d="M1906 207h7l-3.500-4z" fill="#777"/>
<path d="M1906 973h7l-3.500 4z" fill="#666"/>
<g fill="none" stroke="#666" stroke-width="1" shape-rendering="crispEdges">
<rect x="1640.500" y="1014.500" width="12" height="12"/><path d="M1644.500 1014.500v12M1648.500 1014.500v12M1640.500 1018.500h12M1640.500 1022.500h12"/>
<rect x="1678.500" y="1014.500" width="13" height="12"/><rect x="1681.500" y="1017.500" width="7" height="7"/><path d="M1683 1019.500h4M1683 1021.500h4"/>
<path d="M1716.500 1014.500v12h13v-12zM1716.500 1020.500h13M1720.500 1014.500v6M1724.500 1014.500v6"/>
<path d="M1757 1020.500h100" stroke="#a0a0a0"/><path d="M1807.500 1017v7" stroke="#a0a0a0"/>
</g>
<rect x="1747" y="1020" width="6" height="2" fill="#555"/>
<rect x="1817" y="1015" width="4" height="11" fill="#555"/>
<path d="M1861 1021h8M1865 1017v8" stroke="#555" stroke-width="1.800"/>
</svg>
</body></html>
